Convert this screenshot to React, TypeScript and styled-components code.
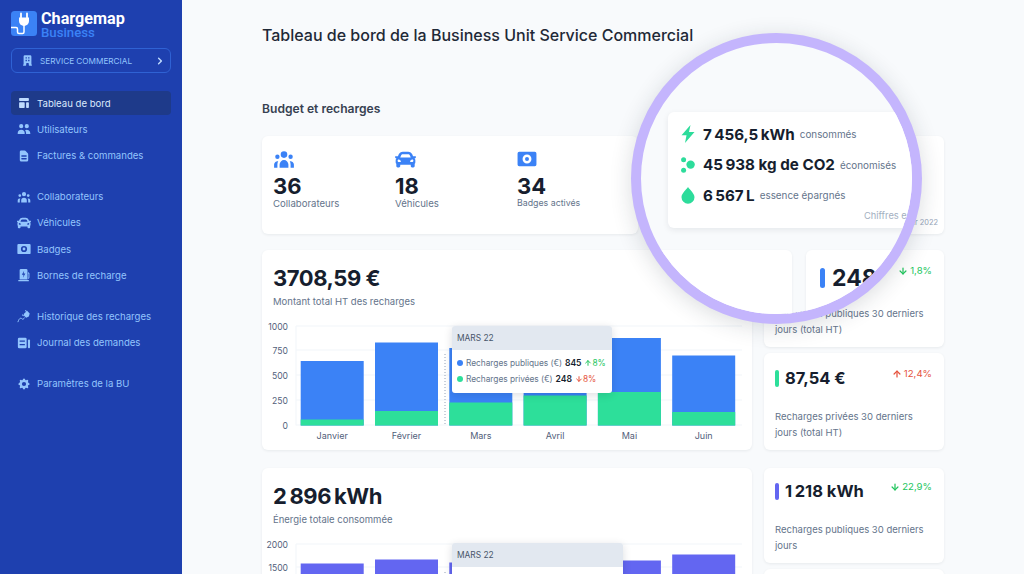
import styled, { createGlobalStyle } from 'styled-components'
import { ReactNode } from 'react'
import {
  HiTemplate, HiUsers, HiDocumentText, HiUserGroup, HiCog, HiOfficeBuilding,
  HiChevronRight
} from 'react-icons/hi'
import { FaCar } from 'react-icons/fa'
import { ArrowUp, ArrowDown } from 'lucide-react'

const GlobalStyle = createGlobalStyle`
  html, body { margin: 0; padding: 0; height: 100%; }
  body { font-family: Inter, "Liberation Sans", sans-serif; background: #f8fafc; overflow: hidden; }
`

const Page = styled.div`
  position: relative;
  display: flex;
  width: 1024px;
  height: 574px;
  overflow: hidden;
  background: #f8fafc;
`

const Sidebar = styled.aside`
  flex: 0 0 182px;
  height: 574px;
  background: #1e40af;
  padding: 11px 11px 0;
  box-sizing: border-box;
`

const Brand = styled.div`
  display: flex;
  align-items: flex-start;
  gap: 4px;
  height: 37px;
`

const BrandText = styled.div`
  display: flex;
  flex-direction: column;
  font-family: Roboto, sans-serif;
  font-weight: 700;
  font-size: 16.2px;
  line-height: 15px;
  color: #fff;
  span {
    color: #3b82f6;
    font-weight: 500;
    font-size: 13.2px;
    line-height: 13px;
  }
`

const ServiceBox = styled.div`
  display: flex;
  align-items: center;
  height: 25px;
  width: 160px;
  box-sizing: border-box;
  padding: 0 3px 0 9px;
  border: 1px solid #2f62d4;
  border-radius: 6px;
  color: #93c5fd;
  font-size: 8.2px;
  svg:first-child { margin-right: 6px; }
  svg:last-child { margin-left: auto; color: #bfdbfe; }
`

const Nav = styled.nav`
  margin-top: 18px;
  display: flex;
  flex-direction: column;
`

const NavGroup = styled.div`
  display: flex;
  flex-direction: column;
  gap: 2.25px;
  margin-bottom: 17px;
`

const NavItem = styled.div<{ $active?: boolean }>`
  display: flex;
  align-items: center;
  gap: 6px;
  height: 24px;
  width: 160px;
  box-sizing: border-box;
  padding-left: 6px;
  border-radius: 4px;
  font-size: 9.6px;
  color: ${p => (p.$active ? '#dbeafe' : '#93c5fd')};
  background: ${p => (p.$active ? '#1e3a8a' : 'transparent')};
  svg { flex: 0 0 14px; color: ${p => (p.$active ? '#bfdbfe' : '#93c5fd')}; }
`

const Main = styled.main`
  flex: 1;
  padding: 24px 0 0 80px;
  box-sizing: border-box;
`

const Title = styled.h1`
  margin: 0;
  font-size: 16px;
  line-height: 22px;
  font-weight: 500;
  color: #1f2937;
`

const SectionTitle = styled.h2`
  margin: 54px 0 0;
  font-size: 12.1px;
  line-height: 18px;
  font-weight: 600;
  color: #374151;
`

const Card = styled.div`
  background: #fff;
  border-radius: 6px;
  box-shadow: 0 1px 3px rgba(15, 23, 42, 0.07);
`

const TopRow = styled.div`
  margin-top: 18px;
  display: grid;
  grid-template-columns: 376px 289px;
  gap: 17px;
  height: 98px;
`

const StatCard = styled(Card)`
  display: grid;
  grid-template-columns: repeat(3, 122px);
  padding: 12px 0 0 11px;
  box-sizing: border-box;
`

const Stat = styled.div`
  display: flex;
  flex-direction: column;
  svg { color: #3b82f6; display: block; }
`

const StatIcon = styled.div`
  height: 22px;
  display: flex;
  align-items: center;
`

const StatValue = styled.div`
  margin-top: 3px;
  font-size: 22px;
  line-height: 26px;
  font-weight: 700;
  color: #161e2e;
`

const StatLabel = styled.div<{ $small?: boolean }>`
  margin-top: -2px;
  font-size: ${p => (p.$small ? '8.8px' : '9.6px')};
  line-height: ${p => (p.$small ? '11px' : '13px')};
  color: #64748b;
`

const EnvCard = styled(Card)`
  display: flex;
  justify-content: flex-end;
  align-items: flex-end;
  padding: 0 6px 6px 0;
`

const EnvNote = styled.div`
  font-size: 7.4px;
  line-height: 10px;
  color: #94a3b8;
`

const DataRow = styled.div<{ $top: number }>`
  margin-top: ${p => p.$top}px;
  display: grid;
  grid-template-columns: 490px 180px;
  gap: 12px;
`

const ChartCard = styled(Card)`
  height: 200px;
  padding-top: 14px;
  box-sizing: border-box;
`

const BigValue = styled.div`
  margin-left: 11px;
  font-size: 22px;
  line-height: 28px;
  font-weight: 700;
  letter-spacing: -0.45px;
  color: #161e2e;
`

const BigLabel = styled.div`
  margin: 2px 0 0 11px;
  font-size: 9.5px;
  line-height: 16px;
  color: #64748b;
`

const ChartWrap = styled.div`
  position: relative;
  margin-top: 10px;
  height: 130px;
  svg { display: block; }
  text { font-family: Inter, sans-serif; font-size: 9px; fill: #52607a; }
  text.tick { font-size: 8.6px; }
`

const Tooltip = styled.div<{ $top: number; $width: number }>`
  position: absolute;
  left: 190px;
  top: ${p => p.$top}px;
  width: ${p => p.$width}px;
  background: #fff;
  border-radius: 3px;
  box-shadow: 0 2px 8px rgba(15, 23, 42, 0.14);
  overflow: hidden;
`

const TooltipHead = styled.div`
  height: 24px;
  line-height: 24px;
  padding-left: 5px;
  background: #e2e8f0;
  font-size: 8.4px;
  color: #475569;
`

const TooltipBody = styled.div`
  padding: 5px 0 6px 5px;
  min-height: 30px;
`

const TooltipRow = styled.div`
  display: flex;
  align-items: center;
  height: 15.8px;
  font-size: 8.4px;
  letter-spacing: -0.05px;
  color: #64748b;
  white-space: nowrap;
  b { margin-left: 3px; font-weight: 600; font-size: 8.6px; color: #161e2e; }
`

const Dot = styled.i<{ $color: string }>`
  flex: 0 0 6px;
  height: 6px;
  margin-right: 3px;
  border-radius: 50%;
  background: ${p => p.$color};
`

const TipTrend = styled.span<{ $up?: boolean }>`
  display: inline-flex;
  align-items: center;
  margin-left: 3px;
  gap: 0;
  color: ${p => (p.$up ? '#22c55e' : '#e5533d')};
`

const SideColumn = styled.div`
  display: flex;
  flex-direction: column;
  gap: 6px;
`

const SideCard = styled(Card)<{ $dense?: boolean }>`
  position: relative;
  height: ${p => (p.$dense ? 95 : 97)}px;
  padding: 0 11px;
  box-sizing: border-box;
`

const SideHead = styled.div<{ $dense?: boolean }>`
  display: flex;
  align-items: center;
  gap: 6px;
  padding-top: ${p => (p.$dense ? 14 : 16)}px;
  height: ${p => (p.$dense ? 33 : 35)}px;
  box-sizing: border-box;
`

const Marker = styled.i<{ $color: string }>`
  width: 4px;
  height: 17px;
  border-radius: 2px;
  background: ${p => p.$color};
`

const SideValue = styled.div`
  font-size: 16.5px;
  line-height: 19px;
  font-weight: 700;
  color: #161e2e;
`

const Trend = styled.div<{ $up?: boolean; $dense?: boolean }>`
  position: absolute;
  top: ${p => (p.$dense ? 12.5 : 14.5)}px;
  right: 12px;
  display: flex;
  align-items: center;
  gap: 2px;
  font-size: 9.6px;
  line-height: 12px;
  color: ${p => (p.$up ? '#e5533d' : '#22c55e')};
`

const SideLabel = styled.div`
  margin-top: 21px;
  font-size: 9.5px;
  line-height: 15.5px;
  color: #64748b;
`

const Lens = styled.div`
  position: absolute;
  left: 631px;
  top: 33px;
  width: 291px;
  height: 291px;
  box-sizing: border-box;
  border: 10px solid #c4b5fd;
  border-radius: 50%;
  background: #f8fafc;
  overflow: hidden;
  padding: 69px 0 0 27px;
  box-shadow: 0 4px 22px rgba(30, 41, 59, 0.16);
  background-clip: padding-box;
`

const LensCard = styled(Card)`
  width: 300px;
  height: 116px;
  box-sizing: border-box;
  padding: 7px 0 0 13px;
  box-shadow: 0 2px 6px rgba(15, 23, 42, 0.08);
`

const LensRow = styled.div`
  display: flex;
  align-items: center;
  height: 30.5px;
  b { margin-left: 8px; font-size: 15.2px; font-weight: 700; color: #161e2e; }
  span { margin-left: 5px; font-size: 9.9px; color: #64748b; }
  svg { flex: 0 0 14px; }
`

const LensNote = styled.div`
  margin: -1px 0 0 183px;
  font-size: 9.3px;
  line-height: 12px;
  color: #a3afbf;
  white-space: nowrap;
`

const LensLower = styled.div`
  display: grid;
  grid-template-columns: 151px 200px;
  gap: 14px;
  margin: 22px 0 0 -27px;
`

const LensCardPlain = styled(Card)`
  height: 100px;
`

const LensSide = styled(Card)`
  display: flex;
  align-items: flex-start;
  gap: 7px;
  height: 100px;
  padding: 18px 0 0 14px;
  box-sizing: border-box;
  i { width: 5px; height: 20px; border-radius: 3px; background: #3b82f6; }
  b { font-size: 23px; line-height: 20px; font-weight: 700; color: #161e2e; }
`

const Logo = () => (
  <svg width="26" height="25" viewBox="0 0 26 25">
    <rect width="26" height="25" rx="3.5" fill="#3b82f6" />
    <path d="M10 2.5v4M16 2.5v4" stroke="#fff" strokeWidth="1.8" strokeLinecap="round" />
    <path d="M8 6.5h10v3.5a5 5 0 0 1-10 0z" fill="#fff" />
    <path d="M0 16.5h5a1.5 1.5 0 0 1 1.5 1.5v3a1.5 1.5 0 0 0 1.5 1.5h3.5a1.5 1.5 0 0 0 1.5-1.5v-7" fill="none" stroke="#fff" strokeWidth="1.5" />
  </svg>
)

const BadgeIcon = ({ size = 14 }: { size?: number }) => (
  <svg width={size} height={size} viewBox="0 0 18 18" fill="currentColor">
    <path fillRule="evenodd" d="M2 2.5h14a1.5 1.5 0 0 1 1.5 1.5v10a1.5 1.5 0 0 1-1.5 1.5H2A1.5 1.5 0 0 1 .5 14V4A1.5 1.5 0 0 1 2 2.5zM9 5a4 4 0 1 0 0 8 4 4 0 0 0 0-8zm0 2.2a1.8 1.8 0 1 1 0 3.6 1.8 1.8 0 0 1 0-3.6z" />
  </svg>
)

const StationIcon = () => (
  <svg width="14" height="14" viewBox="0 0 16 16" fill="currentColor">
    <path fillRule="evenodd" d="M4.5 1h6A1.5 1.5 0 0 1 12 2.5V13H3V2.5A1.5 1.5 0 0 1 4.5 1zM8.2 3 5.5 7.6h2L6.8 11l2.8-4.7h-2z" />
    <path d="M1.5 13.6h12V15h-12zM12.6 4.5l1.6 1.4v5a1.6 1.6 0 0 1-1.6 1.5v-1.2c.3 0 .5-.1.5-.4V6.6l-.5-.4z" />
  </svg>
)

const PlugIcon = () => (
  <svg width="14" height="14" viewBox="0 0 16 16" fill="currentColor">
    <path d="M8 5.5 11.5 2l3 3-1 3.5-3 1.5-3-3z" />
    <path d="M1 15c.8-2.4 1.8-4.2 3-4.4 1.6-.3 1.7 1.5 3 1 .8-.3 1.2-1 1.6-1.8" fill="none" stroke="currentColor" strokeWidth="1.1" />
    <path d="M9.5 1.5 11 3M6 6.5 7.5 8" stroke="currentColor" strokeWidth="1.2" />
  </svg>
)

const JournalIcon = () => (
  <svg width="14" height="14" viewBox="0 0 16 16" fill="currentColor">
    <path fillRule="evenodd" d="M2.5 2h7A1.5 1.5 0 0 1 11 3.5v9A1.5 1.5 0 0 1 9.5 14h-7A1.5 1.5 0 0 1 1 12.5v-9A1.5 1.5 0 0 1 2.5 2zM3 5v1.6h6V5zm0 4v1.6h6V9z" />
    <rect x="12.5" y="4" width="2.4" height="10" rx="1.1" />
  </svg>
)

const BoltIcon = () => (
  <svg width="14" height="18" viewBox="0 0 14 18" fill="#2ddc9b">
    <path d="M9.5 0 .5 10.2h5L4 18l9.5-11H8z" />
  </svg>
)

const MoleculeIcon = () => (
  <svg width="14" height="16" viewBox="0 0 14 16" fill="#2ddc9b">
    <circle cx="2.6" cy="2.8" r="2.5" />
    <circle cx="2.6" cy="13.2" r="2.5" />
    <circle cx="9.6" cy="7.6" r="4.2" />
  </svg>
)

const DropIcon = () => (
  <svg width="14" height="17" viewBox="0 0 14 17" fill="#2ddc9b">
    <path d="M7 0c2 3 6.5 6.6 6.5 10.2A6.5 6.5 0 0 1 .5 10.2C.5 6.6 5 3 7 0z" />
  </svg>
)

const navGroups: { label: string; icon: ReactNode; active?: boolean }[][] = [
  [
    { label: 'Tableau de bord', icon: <HiTemplate size={14} />, active: true },
    { label: 'Utilisateurs', icon: <HiUsers size={14} /> },
    { label: 'Factures & commandes', icon: <HiDocumentText size={14} /> }
  ],
  [
    { label: 'Collaborateurs', icon: <HiUserGroup size={14} /> },
    { label: 'Véhicules', icon: <FaCar size={14} /> },
    { label: 'Badges', icon: <BadgeIcon /> },
    { label: 'Bornes de recharge', icon: <StationIcon /> }
  ],
  [
    { label: 'Historique des recharges', icon: <PlugIcon /> },
    { label: 'Journal des demandes', icon: <JournalIcon /> }
  ],
  [{ label: 'Paramètres de la BU', icon: <HiCog size={14} /> }]
]

const months = ['Janvier', 'Février', 'Mars', 'Avril', 'Mai', 'Juin']

type ChartProps = {
  ticks: { label: string; y: number }[]
  bars: { total: number; low?: number }[]
  totalColor: string
  showMonths?: boolean
}

function BarChart ({ ticks, bars, totalColor, showMonths }: ChartProps) {
  const baseline = 105.5
  return (
    <svg width="490" height="130">
      {ticks.map(t => (
        <g key={t.label}>
          <text className="tick" x="26" y={t.y + 4} textAnchor="end">{t.label}</text>
          <line x1="34" x2="480" y1={t.y} y2={t.y} stroke="#f1f5f9" />
        </g>
      ))}
      <line x1="34" x2="34" y1={ticks[0].y} y2={baseline} stroke="#f1f5f9" />
      {bars.map((b, i) => {
        const x = 38.7 + i * 74.3
        return (
          <g key={months[i]}>
            <rect x={x} y={baseline - b.total} width="63" height={b.total} fill={totalColor} />
            {b.low ? <rect x={x} y={baseline - b.low} width="63" height={b.low} fill="#2ddf9a" /> : null}
            {showMonths ? <text x={x + 31.5} y="119" textAnchor="middle">{months[i]}</text> : null}
          </g>
        )
      })}
      <line x1="183" x2="183" y1="34" y2={baseline} stroke="#94a3b8" strokeDasharray="1 2" />
    </svg>
  )
}

const euroBars = [
  { total: 64.5, low: 6 },
  { total: 83, low: 14.5 },
  { total: 77.5, low: 23 },
  { total: 85, low: 30 },
  { total: 87.5, low: 33.5 },
  { total: 70, low: 13.5 }
]
const energyBars = [{ total: 80 }, { total: 84 }, { total: 81 }, { total: 82 }, { total: 83 }, { total: 89 }]

const euroTicks = [
  { label: '1000', y: 6 }, { label: '750', y: 30 }, { label: '500', y: 55 },
  { label: '250', y: 80 }, { label: '0', y: 105 }
]
const energyTicks = [{ label: '2000', y: 6 }, { label: '1500', y: 29 }]

type SideProps = { color: string; value: string; trend: string; up?: boolean; dense?: boolean; label: string }

function SideStat ({ color, value, trend, up, dense, label }: SideProps) {
  return (
    <SideCard $dense={dense}>
      <SideHead $dense={dense}>
        <Marker $color={color} />
        <SideValue>{value}</SideValue>
      </SideHead>
      <Trend $up={up} $dense={dense}>
        {up ? <ArrowUp size={10} strokeWidth={3} /> : <ArrowDown size={10} strokeWidth={3} />}
        {trend}
      </Trend>
      <SideLabel>{label}</SideLabel>
    </SideCard>
  )
}

function App () {
  return (
    <Page>
      <GlobalStyle />
      <Sidebar>
        <Brand>
          <Logo />
          <BrandText>Chargemap<span>Business</span></BrandText>
        </Brand>
        <ServiceBox>
          <HiOfficeBuilding size={13} />
          SERVICE COMMERCIAL
          <HiChevronRight size={14} />
        </ServiceBox>
        <Nav>
          {navGroups.map(group => (
            <NavGroup key={group[0].label}>
              {group.map(item => (
                <NavItem $active={item.active} key={item.label}>
                  {item.icon}
                  {item.label}
                </NavItem>
              ))}
            </NavGroup>
          ))}
        </Nav>
      </Sidebar>
      <Main>
        <Title>Tableau de bord de la Business Unit Service Commercial</Title>
        <SectionTitle>Budget et recharges</SectionTitle>
        <TopRow>
          <StatCard>
            <Stat>
              <StatIcon><HiUserGroup size={22} /></StatIcon>
              <StatValue>36</StatValue>
              <StatLabel>Collaborateurs</StatLabel>
            </Stat>
            <Stat>
              <StatIcon><FaCar size={21} /></StatIcon>
              <StatValue>18</StatValue>
              <StatLabel>Véhicules</StatLabel>
            </Stat>
            <Stat>
              <StatIcon><BadgeIcon size={20} /></StatIcon>
              <StatValue>34</StatValue>
              <StatLabel $small>Badges activés</StatLabel>
            </Stat>
          </StatCard>
          <EnvCard>
            <EnvNote>Chiffres estimés fin février 2022</EnvNote>
          </EnvCard>
        </TopRow>
        <DataRow $top={16}>
          <ChartCard>
            <BigValue>3708,59 €</BigValue>
            <BigLabel>Montant total HT des recharges</BigLabel>
            <ChartWrap>
              <BarChart ticks={euroTicks} bars={euroBars} totalColor="#3b82f6" showMonths />
              <Tooltip $top={6} $width={160}>
                <TooltipHead>MARS 22</TooltipHead>
                <TooltipBody>
                  <TooltipRow>
                    <Dot $color="#3b82f6" />Recharges publiques (€)<b>845</b>
                    <TipTrend $up><ArrowUp size={8} strokeWidth={3} />8%</TipTrend>
                  </TooltipRow>
                  <TooltipRow>
                    <Dot $color="#2ddf9a" />Recharges privées (€)<b>248</b>
                    <TipTrend><ArrowDown size={8} strokeWidth={3} />8%</TipTrend>
                  </TooltipRow>
                </TooltipBody>
              </Tooltip>
            </ChartWrap>
          </ChartCard>
          <SideColumn>
            <SideStat color="#3b82f6" value="248,12 €" trend="1,8%" label="Recharges publiques 30 derniers jours (total HT)" />
            <SideStat color="#2ddf9a" value="87,54 €" trend="12,4%" up label="Recharges privées 30 derniers jours (total HT)" />
          </SideColumn>
        </DataRow>
        <DataRow $top={18}>
          <ChartCard>
            <BigValue>2{'\u202f'}896{'\u202f'}kWh</BigValue>
            <BigLabel>Énergie totale consommée</BigLabel>
            <ChartWrap>
              <BarChart ticks={energyTicks} bars={energyBars} totalColor="#6366f1" />
              <Tooltip $top={5} $width={171}>
                <TooltipHead>MARS 22</TooltipHead>
                <TooltipBody />
              </Tooltip>
            </ChartWrap>
          </ChartCard>
          <SideColumn>
            <SideStat color="#6366f1" value={'1\u202f218\u00a0kWh'} trend="22,9%" dense label="Recharges publiques 30 derniers jours" />
            <SideCard />
          </SideColumn>
        </DataRow>
      </Main>
      <Lens>
        <LensCard>
          <LensRow>
            <BoltIcon />
            <b>7{'\u202f'}456,5{'\u202f'}kWh</b>
            <span>consommés</span>
          </LensRow>
          <LensRow>
            <MoleculeIcon />
            <b>45{'\u202f'}938 kg de CO2</b>
            <span>économisés</span>
          </LensRow>
          <LensRow>
            <DropIcon />
            <b>6{'\u202f'}567{'\u202f'}L</b>
            <span>essence épargnés</span>
          </LensRow>
          <LensNote>Chiffres estimés fin février 2022</LensNote>
        </LensCard>
        <LensLower>
          <LensCardPlain />
          <LensSide>
            <i />
            <b>248,12 €</b>
          </LensSide>
        </LensLower>
      </Lens>
    </Page>
  )
}

export default App
